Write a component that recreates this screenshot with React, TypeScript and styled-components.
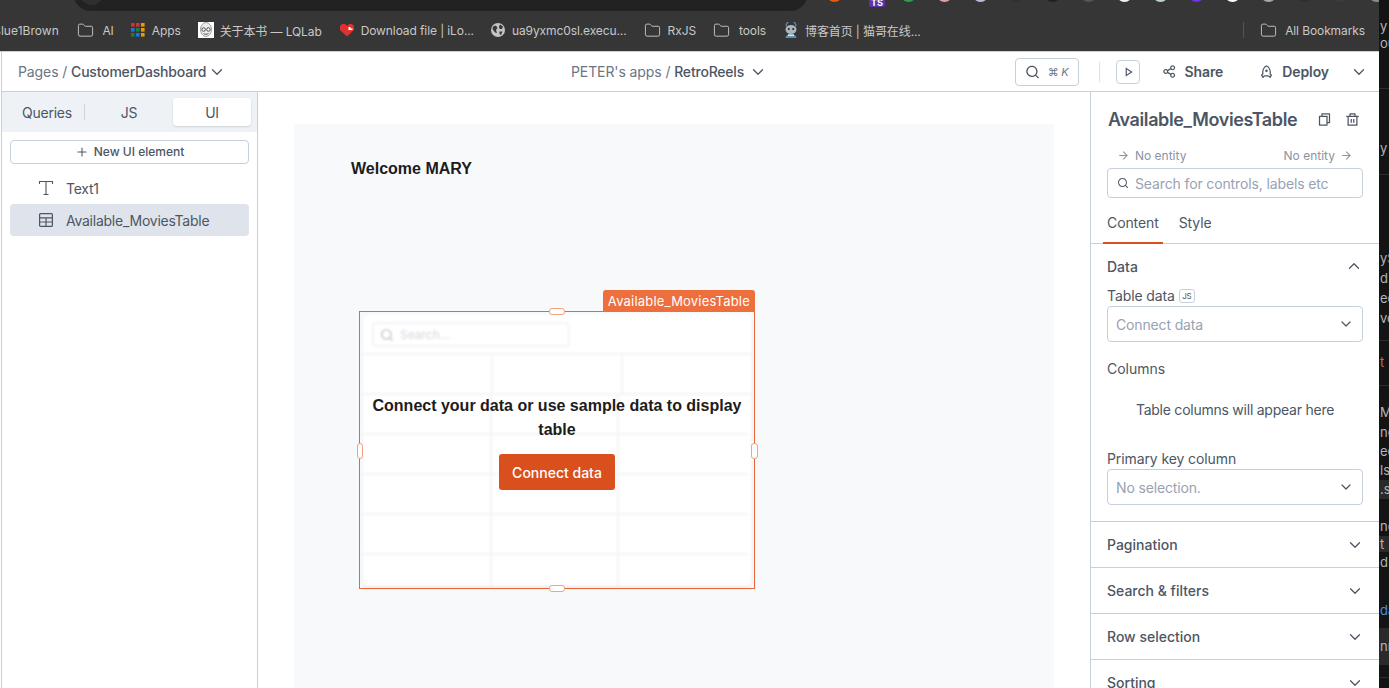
import React, { FunctionComponent, ReactNode } from "react"
import styled, { createGlobalStyle } from "styled-components"
import { ChevronDown, ChevronUp, Folder, Plus } from "lucide-react"
import {
  RiArrowRightLine,
  RiDeleteBinLine,
  RiFileCopyLine,
  RiPlayLine,
  RiRocketLine,
  RiSearchLine,
  RiShareLine,
} from "react-icons/ri"

const GlobalStyle = createGlobalStyle`
  html, body {
    margin: 0;
    height: 100%;
    overflow: hidden;
    background: #ffffff;
  }
  #root {
    height: 100%;
  }
  * {
    box-sizing: border-box;
  }
`

const FolderGlyph = () => <Folder size={17} strokeWidth={1.3} />

function AppsGrid() {
  const colors = ["#d93025", "#d93025", "#f29900", "#1a73e8", "#188038", "#f29900", "#188038", "#1a73e8", "#f29900"]
  return (
    <svg width="14" height="14" viewBox="0 0 14 14">
      {colors.map((c, i) => (
        <rect key={i} x={(i % 3) * 5} y={Math.floor(i / 3) * 5} width="3.6" height="3.6" fill={c} />
      ))}
    </svg>
  )
}

function FaceIcon() {
  return (
    <svg width="16" height="16" viewBox="0 0 16 16">
      <rect width="16" height="16" fill="#fff" />
      <ellipse cx="8" cy="7.500" rx="5.500" ry="7" fill="#ececec" stroke="#666" strokeWidth="0.6" />
      <circle cx="5.600" cy="7.500" r="1.800" fill="none" stroke="#333" strokeWidth="0.8" />
      <circle cx="10.400" cy="7.500" r="1.800" fill="none" stroke="#333" strokeWidth="0.8" />
      <path d="M5.500 11.500c1.500 1 3.500 1 5 0" fill="none" stroke="#333" strokeWidth="0.8" />
    </svg>
  )
}

function HeartIcon() {
  return (
    <svg width="16" height="14" viewBox="0 0 16 14">
      <path d="M8 13.500 1 7V3l2-2h3l2 2 2-2h3l2 2v4z" fill="#e03131" />
      <path d="M9.500 4h2v1.500h2V7h-4z" fill="#fff" />
    </svg>
  )
}

function GlobeIcon() {
  return (
    <svg width="14" height="14" viewBox="0 0 14 14">
      <circle cx="7" cy="7" r="7" fill="#c4c4c4" />
      <path d="M2 3.500 5 2.500 6.500 5 5 7 6 10 4 9.500 1.500 6zM9 1.500l3 2-1 2.500H8.500L8 3.500zM8.500 8.500h3l-1.500 3.500-1.500-1z" fill="#383838" />
    </svg>
  )
}

function CatIcon() {
  return (
    <svg width="16" height="17" viewBox="0 0 16 17">
      <path d="M3 4a5 5 0 0 1 10 0" fill="none" stroke="#5d8fb0" strokeWidth="1.200" />
      <ellipse cx="8" cy="7.500" rx="5.500" ry="4.500" fill="#aab4bc" />
      <circle cx="5.800" cy="7" r="1" fill="#222" />
      <circle cx="10.200" cy="7" r="1" fill="#222" />
      <path d="M2.500 16c.4-3 2.500-4 5.500-4s5.100 1 5.500 4z" fill="#5d8fb0" />
      <rect x="5" y="12.500" width="6" height="1.500" fill="#e8e8e8" />
    </svg>
  )
}

function TextGlyph() {
  return (
    <svg width="16" height="16" viewBox="0 0 16 16" fill="none" stroke="#4c5664" strokeWidth="1.100">
      <path d="M1.500 4V1.500h13V4M8 1.500v13M5.500 14.500h5" />
    </svg>
  )
}

function TableGlyph() {
  return (
    <svg width="16" height="16" viewBox="0 0 16 16" fill="none" stroke="#4c5664" strokeWidth="1.200">
      <rect x="1.600" y="1.600" width="12.800" height="12.800" rx="1" />
      <path d="M1.600 5.800h12.800M1.600 10h12.800M8 5.800v8.600" />
    </svg>
  )
}

const bookmarks: { label: string; icon: ReactNode; gap: number }[] = [
  { label: "AI", icon: <FolderGlyph />, gap: 8 },
  { label: "Apps", icon: <AppsGrid />, gap: 7 },
  { label: "关于本书 — LQLab", icon: <FaceIcon />, gap: 6 },
  { label: "Download file | iLo...", icon: <HeartIcon />, gap: 6 },
  { label: "ua9yxmc0sl.execu...", icon: <GlobeIcon />, gap: 7 },
  { label: "RxJS", icon: <FolderGlyph />, gap: 7 },
  { label: "tools", icon: <FolderGlyph />, gap: 9 },
  { label: "博客首页 | 猫哥在线...", icon: <CatIcon />, gap: 6 },
]

const extensionColors = [
  "#e8590c", "", "#2f9e44", "#e0a0a0", "#b9bfd8", "#2c3238", "#241f1f", "#5a5656",
  "#f2f2f2", "#bcd4c4", "#6b35e8", "#ffffff", "#a8a8a8", "#2f2f2f", "#3a4038", "#8a8a8a",
]

const sections = ["Pagination", "Search & filters", "Row selection", "Sorting"]

// what shows of the window behind, at the right edge
const edgeRows: { h: number; text?: string; tone?: "orange" | "blue"; chip?: boolean; rule?: boolean }[] = [
  { h: 17 },
  { h: 18, text: "y" },
  { h: 17, text: "ou" },
  { h: 37, rule: true },
  { h: 50 },
  { h: 18, text: "y" },
  { h: 18, rule: true },
  { h: 74 },
  { h: 19, text: "yS" },
  { h: 20, text: "d" },
  { h: 20, text: "ed" },
  { h: 20, text: "vo" },
  { h: 13, rule: true },
  { h: 12 },
  { h: 18, text: "t", tone: "orange" },
  { h: 15, rule: true },
  { h: 17 },
  { h: 19, text: "M" },
  { h: 20, text: "ne" },
  { h: 19, text: "ed" },
  { h: 19, text: "ls" },
  { h: 19, text: ".s", chip: true },
  { h: 18 },
  { h: 19, text: "nc" },
  { h: 16, text: "t", chip: true },
  { h: 20, text: "d t" },
  { h: 29 },
  { h: 18, text: "da", tone: "blue" },
  { h: 9 },
  { h: 37, text: "nn", chip: true },
  { h: 13, rule: true },
]

const ghostRows = [0, 1, 2, 3, 4, 5]

const App: FunctionComponent = () => (
  <>
    <GlobalStyle />
    <Window>
      <Main>
        <BrowserChrome>
          <AddressBar>
            <AddressButton />
          </AddressBar>
          <ExtensionStrip>
            {extensionColors.map((c, i) =>
              c ? <ExtDot key={i} $color={c} /> : <ExtBadge key={i}>TS</ExtBadge>
            )}
          </ExtensionStrip>
          <BookmarkBar>
            <BookmarkCut>Blue1Brown</BookmarkCut>
            {bookmarks.map((b) => (
              <Bookmark key={b.label} $gap={b.gap}>
                {b.icon}
                <span>{b.label}</span>
              </Bookmark>
            ))}
            <BookmarkEnd>
              <Divider />
              <Bookmark $gap={8}>
                <FolderGlyph />
                <span>All Bookmarks</span>
              </Bookmark>
            </BookmarkEnd>
          </BookmarkBar>
        </BrowserChrome>

        <Workspace>
          <Header>
            <HeaderCrumb $chevronGap={2}>
              <Muted>Pages /&nbsp;</Muted>
              <Strong>CustomerDashboard</Strong>
              <ChevronDown size={18} strokeWidth={1.7} color="#4c5664" />
            </HeaderCrumb>
            <HeaderCrumb $chevronGap={5}>
              <Muted>PETER's apps /&nbsp;</Muted>
              <Strong>RetroReels</Strong>
              <ChevronDown size={18} strokeWidth={1.7} color="#4c5664" />
            </HeaderCrumb>
            <HeaderRight>
              <OmniButton>
                <RiSearchLine size={16} />
                <Kbd>
                  ⌘ <i>K</i>
                </Kbd>
              </OmniButton>
              <HeaderDivider />
              <PlayButton>
                <RiPlayLine size={14} />
              </PlayButton>
              <ShareAction>
                <RiShareLine size={15} />
                Share
              </ShareAction>
              <DeployAction>
                <RiRocketLine size={15} />
                Deploy
              </DeployAction>
              <DeployMenu>
                <ChevronDown size={18} strokeWidth={1.7} color="#4c5664" />
              </DeployMenu>
            </HeaderRight>
          </Header>

          <Body>
            <Sidebar>
              <SegmentBar>
                <Segment>Queries</Segment>
                <SegmentDivider />
                <Segment>JS</Segment>
                <Segment $active>UI</Segment>
              </SegmentBar>
              <NewElement>
                <Plus size={14} strokeWidth={1.8} />
                New UI element
              </NewElement>
              <EntityList>
                <EntityRow>
                  <TextGlyph />
                  Text1
                </EntityRow>
                <EntityRow $selected>
                  <TableGlyph />
                  Available_MoviesTable
                </EntityRow>
              </EntityList>
            </Sidebar>

            <CanvasArea>
              <Canvas>
                <Welcome>Welcome MARY</Welcome>
                <Widget>
                  <WidgetTag>Available_MoviesTable</WidgetTag>
                  <Handle $side="top" />
                  <Handle $side="bottom" />
                  <Handle $side="left" />
                  <Handle $side="right" />
                  <GhostTable>
                    <GhostToolbar>
                      <GhostSearch>
                        <RiSearchLine size={14} color="#b9bcc2" />
                        Search...
                      </GhostSearch>
                    </GhostToolbar>
                    {ghostRows.map((r) => (
                      <GhostRow key={r} $first={r === 0} $last={r === 5}>
                        <GhostCell />
                        <GhostCell />
                        <div />
                      </GhostRow>
                    ))}
                  </GhostTable>
                  <Onboarding>
                    <OnboardingText>Connect your data or use sample data to display table</OnboardingText>
                    <ConnectButton>Connect data</ConnectButton>
                  </Onboarding>
                </Widget>
              </Canvas>
            </CanvasArea>

            <Pane>
              <PaneTitleRow>
                <PaneTitle>Available_MoviesTable</PaneTitle>
                <RiFileCopyLine size={15} />
                <RiDeleteBinLine size={15} />
              </PaneTitleRow>
              <EntityNav>
                <span>
                  <RiArrowRightLine size={13} /> No entity
                </span>
                <span>
                  No entity <RiArrowRightLine size={13} />
                </span>
              </EntityNav>
              <PaneSearch>
                <RiSearchLine size={12} color="#4c5664" />
                Search for controls, labels etc
              </PaneSearch>
              <PaneTabs>
                <PaneTab $active>Content</PaneTab>
                <PaneTab>Style</PaneTab>
              </PaneTabs>
              <OpenSection>
                <SectionHead>
                  Data
                  <ChevronUp size={18} strokeWidth={1.7} />
                </SectionHead>
                <FieldLabel>
                  Table data <JsBadge>JS</JsBadge>
                </FieldLabel>
                <Select>
                  Connect data
                  <ChevronDown size={16} strokeWidth={1.8} color="#4c5664" />
                </Select>
                <ColumnsLabel>Columns</ColumnsLabel>
                <EmptyColumns>Table columns will appear here</EmptyColumns>
                <FieldLabel>Primary key column</FieldLabel>
                <Select>
                  No selection.
                  <ChevronDown size={16} strokeWidth={1.8} color="#4c5664" />
                </Select>
              </OpenSection>
              {sections.map((s) => (
                <ClosedSection key={s}>
                  {s}
                  <ChevronDown size={18} strokeWidth={1.7} />
                </ClosedSection>
              ))}
            </Pane>
          </Body>
        </Workspace>
      </Main>
      <EdgeStrip>
        {edgeRows.map((r, i) => (
          <EdgeRow key={i} $h={r.h} $tone={r.tone} $chip={r.chip} $rule={r.rule}>
            {r.text}
          </EdgeRow>
        ))}
      </EdgeStrip>
    </Window>
  </>
)

export default App

const Window = styled.div`
  display: flex;
  width: 1389px;
  height: 688px;
  overflow: hidden;
  font-family: Inter, "Noto Sans CJK SC", sans-serif;
  color: #4c5664;
`

const Main = styled.div`
  width: 1379px;
  display: flex;
  flex-direction: column;
  flex: none;
`

const EdgeStrip = styled.div`
  flex: 1;
  min-width: 0;
  overflow: hidden;
  background: #141414;
`

const edgeTones = { orange: "#b5703f", blue: "#4f8fd6" }

const EdgeRow = styled.div<{ $h: number; $tone?: "orange" | "blue"; $chip?: boolean; $rule?: boolean }>`
  height: ${(p) => p.$h}px;
  line-height: ${(p) => p.$h}px;
  padding-left: 1px;
  font-size: 13px;
  white-space: nowrap;
  overflow: hidden;
  color: ${(p) => (p.$tone ? edgeTones[p.$tone] : "#b4b4b4")};
  background: ${(p) => (p.$chip ? "#2a2a2a" : "transparent")};
  border-bottom: ${(p) => (p.$rule ? "1px solid #2c2c2c" : "none")};
`

const BrowserChrome = styled.div`
  height: 52px;
  flex: none;
  background: #363636;
  position: relative;
  overflow: hidden;
  border-bottom: 1px solid #c6d0dc;
`

const AddressBar = styled.div`
  position: absolute;
  left: 73px;
  top: -26px;
  width: 735px;
  height: 37px;
  border-radius: 18px;
  background: #222222;
`

const AddressButton = styled.div`
  position: absolute;
  left: 6px;
  top: 6px;
  width: 25px;
  height: 25px;
  border-radius: 50%;
  background: #2f2f2f;
`

const ExtensionStrip = styled.div`
  position: absolute;
  left: 827px;
  top: -11px;
  display: flex;
  gap: 21px;
`

const ExtDot = styled.div<{ $color: string }>`
  width: 15px;
  height: 13px;
  border-radius: 50%;
  background: ${(p) => p.$color};
`

const ExtBadge = styled.div`
  width: 16px;
  height: 18px;
  margin: 0 -5px 0 6px;
  border-radius: 2px;
  background: #5b34a8;
  color: #fff;
  font-size: 9px;
  font-weight: 700;
  text-align: center;
  line-height: 28px;
`

const BookmarkBar = styled.div`
  position: absolute;
  left: 0;
  right: 0;
  top: 19px;
  height: 22px;
  display: flex;
  align-items: center;
  gap: 17px;
  padding-right: 14px;
  color: #c8c8c8;
  font-size: 12px;
  letter-spacing: -0.1px;
`

const BookmarkCut = styled.span`
  margin: 0 1.5px 0 -7px;
  letter-spacing: 0.05px;
  white-space: nowrap;
`

const Bookmark = styled.div<{ $gap: number }>`
  display: flex;
  align-items: center;
  gap: ${(p) => p.$gap}px;
  white-space: nowrap;
  color: #c8c8c8;
`

const BookmarkEnd = styled.div`
  margin-left: auto;
  display: flex;
  align-items: center;
  gap: 16px;
`

const Divider = styled.div`
  width: 1px;
  height: 16px;
  background: #555555;
`

const Workspace = styled.div`
  flex: 1;
  min-height: 0;
  display: flex;
  flex-direction: column;
  margin-left: 1px;
  border-left: 1px solid #c6d0dc;
`

const Header = styled.header`
  height: 40px;
  flex: none;
  display: grid;
  grid-template-columns: 553px auto 1fr;
  align-items: center;
  padding: 0 11px 0 16px;
  background: #ffffff;
  border-bottom: 1px solid #c6d0dc;
  font-size: 14px;
  letter-spacing: -0.2px;
`

const HeaderCrumb = styled.div<{ $chevronGap: number }>`
  display: flex;
  align-items: center;

  svg {
    margin-left: ${(p) => p.$chevronGap}px;
  }
`

const Muted = styled.span`
  color: #6a7585;
  letter-spacing: -0.1px;
`

const Strong = styled.span`
  color: #4c5664;
  font-weight: 500;
`

const HeaderRight = styled.div`
  display: flex;
  align-items: center;
  justify-content: flex-end;
`

const OmniButton = styled.div`
  width: 64px;
  height: 28px;
  display: flex;
  align-items: center;
  gap: 8px;
  padding: 0 9px;
  border: 1px solid #c6d0dc;
  border-radius: 4px;
`

const Kbd = styled.span`
  font-size: 11px;
  color: #6a7585;
  white-space: nowrap;
`

const HeaderDivider = styled.div`
  width: 1px;
  height: 20px;
  margin-left: 20px;
  background: #dce2ea;
`

const PlayButton = styled.div`
  width: 24px;
  height: 24px;
  margin-left: 16px;
  display: flex;
  align-items: center;
  justify-content: center;
  border: 1px solid #c6d0dc;
  border-radius: 4px;
`

const ShareAction = styled.div`
  display: flex;
  align-items: center;
  gap: 8px;
  margin-left: 22px;
  font-weight: 600;
  letter-spacing: -0.1px;
`

const DeployAction = styled(ShareAction)`
  margin-left: 36px;
`

const DeployMenu = styled.div`
  display: flex;
  margin-left: 21px;
`

const Body = styled.div`
  flex: 1;
  min-height: 0;
  display: flex;
`

const Sidebar = styled.aside`
  width: 256px;
  flex: none;
  border-right: 1px solid #c6d0dc;
  background: #ffffff;
`

const SegmentBar = styled.div`
  height: 40px;
  padding: 6px 0 6px 8px;
  display: grid;
  grid-template-columns: 74px 1px 88px 78px;
  align-items: center;
  background: #eef2f6;
`

const Segment = styled.div<{ $active?: boolean }>`
  height: 28px;
  display: flex;
  align-items: center;
  justify-content: center;
  border-radius: 4px;
  font-size: 14px;
  letter-spacing: -0.25px;
  background: ${(p) => (p.$active ? "#ffffff" : "transparent")};
  box-shadow: ${(p) => (p.$active ? "0 1px 2px rgba(76, 86, 100, 0.2)" : "none")};
`

const SegmentDivider = styled.div`
  width: 1px;
  height: 16px;
  background: #cdd5df;
`

const NewElement = styled.div`
  margin: 8px 8px 0;
  height: 24px;
  padding-bottom: 1px;
  display: flex;
  align-items: center;
  justify-content: center;
  gap: 5px;
  border: 1px solid #c6d0dc;
  border-radius: 4px;
  font-size: 12px;
  font-weight: 500;
`

const EntityList = styled.div`
  margin: 8px 8px 0;
`

const EntityRow = styled.div<{ $selected?: boolean }>`
  height: 32px;
  display: flex;
  align-items: center;
  gap: 12px;
  padding-left: 28px;
  border-radius: 4px;
  font-size: 14px;
  letter-spacing: -0.25px;
  background: ${(p) => (p.$selected ? "#dfe4ec" : "transparent")};
`

const CanvasArea = styled.main`
  flex: 1;
  min-width: 0;
  padding: 32px 36px 0;
  background: #ffffff;
`

const Canvas = styled.div`
  height: 100%;
  width: 760px;
  padding: 35px 57px 0;
  background: #f8f9fb;
`

const Welcome = styled.div`
  font-family: "Liberation Sans", sans-serif;
  font-size: 16px;
  font-weight: 700;
  line-height: 20px;
  color: #1c1c1c;
`

const Widget = styled.div`
  position: relative;
  width: 396px;
  height: 278px;
  margin: 132px 0 0 8px;
  border: 1px solid #ed6436;
`

const WidgetTag = styled.div`
  position: absolute;
  right: -1px;
  top: -22px;
  height: 22px;
  padding: 0 5px 1px;
  display: flex;
  align-items: center;
  border-radius: 3px 3px 0 0;
  background: #ee6f3e;
  color: #ffffff;
  font-size: 13px;
  letter-spacing: 0.2px;
  white-space: nowrap;
`

const handlePlacement = {
  top: "left: 189px; top: -4px; width: 16px; height: 7px;",
  bottom: "left: 189px; bottom: -4px; width: 16px; height: 7px;",
  left: "left: -3px; top: 131px; width: 6px; height: 16px;",
  right: "right: -4px; top: 131px; width: 7px; height: 16px;",
}

const Handle = styled.div<{ $side: keyof typeof handlePlacement }>`
  position: absolute;
  ${(p) => handlePlacement[p.$side]}
  z-index: 2;
  background: #ffffff;
  border: 1px solid #f3a283;
  border-radius: 3px;
`

const GhostTable = styled.div`
  height: calc(100% - 5px);
  margin: 3px;
  border-radius: 4px;
  background: #ffffff;
  box-shadow: 0 1px 2px rgba(0, 0, 0, 0.12);
  filter: blur(0.8px);
  overflow: hidden;
`

const GhostToolbar = styled.div`
  height: 40px;
  padding: 7px 0 0 9px;
  border-bottom: 2px solid #f3f4f6;
`

const GhostSearch = styled.div`
  width: 198px;
  height: 25px;
  display: flex;
  align-items: center;
  gap: 6px;
  padding-left: 6px;
  border: 2px solid #f3f4f6;
  border-radius: 4px;
  font-size: 12px;
  color: #d2d6de;
`

const GhostRow = styled.div<{ $first: boolean; $last: boolean }>`
  height: 40px;
  display: grid;
  grid-template-columns: ${(p) => (p.$first ? "130px 130px 1fr" : "129px 127px 1fr")};
  margin-right: ${(p) => (p.$first ? "0" : "3px")};
  border-bottom: ${(p) => (p.$last ? "none" : "2px solid #f3f4f6")};
`

const GhostCell = styled.div`
  border-right: 2px solid #f3f4f6;
`

const Onboarding = styled.div`
  position: absolute;
  left: 0;
  right: 0;
  top: 82px;
  display: flex;
  flex-direction: column;
  align-items: center;
  gap: 12px;
`

const OnboardingText = styled.div`
  width: 384px;
  text-align: center;
  font-family: "Liberation Sans", sans-serif;
  font-size: 16px;
  font-weight: 700;
  line-height: 24px;
  color: #1c1c1c;
`

const ConnectButton = styled.div`
  width: 116px;
  height: 36px;
  display: flex;
  align-items: center;
  justify-content: center;
  border-radius: 3px;
  background: #da4f1e;
  color: #ffffff;
  font-size: 14px;
  font-weight: 500;
`

const Pane = styled.aside`
  width: 289px;
  flex: none;
  overflow: hidden;
  background: #ffffff;
  border-left: 1px solid #c6d0dc;
`

const PaneTitleRow = styled.div`
  display: flex;
  align-items: center;
  gap: 13px;
  padding: 11px 19px 0 17px;
  height: 43px;
`

const PaneTitle = styled.div`
  flex: 1;
  font-size: 18px;
  font-weight: 600;
  letter-spacing: -0.38px;
  white-space: nowrap;
`

const EntityNav = styled.div`
  display: flex;
  justify-content: space-between;
  padding: 13px 26px 0 26px;
  font-size: 12px;
  color: #8a94a3;

  span {
    display: flex;
    align-items: center;
    gap: 5px;
  }
`

const PaneSearch = styled.div`
  margin: 5px 16px 0;
  height: 30px;
  display: flex;
  align-items: center;
  gap: 6px;
  padding: 0 9px;
  border: 1px solid #c6d0dc;
  border-radius: 4px;
  font-size: 14px;
  letter-spacing: -0.13px;
  color: #98a2b2;
`

const PaneTabs = styled.div`
  margin-top: 9px;
  height: 37px;
  display: flex;
  gap: 12px;
  padding-left: 12px;
  border-bottom: 1px solid #c6d0dc;
`

const PaneTab = styled.div<{ $active?: boolean }>`
  padding: 0 4px 4px;
  display: flex;
  align-items: center;
  font-size: 14px;
  height: 37px;
  letter-spacing: -0.1px;
  border-bottom: 2px solid ${(p) => (p.$active ? "#da4f1e" : "transparent")};
`

const OpenSection = styled.div`
  padding: 0 16px 16px;
  border-bottom: 1px solid #c6d0dc;
`

const SectionHead = styled.div`
  display: flex;
  align-items: center;
  justify-content: space-between;
  height: 44px;
  font-size: 14px;
  font-weight: 500;
`

const FieldLabel = styled.div`
  display: flex;
  align-items: center;
  gap: 4px;
  height: 15px;
  font-size: 14px;
  letter-spacing: -0.1px;
`

const JsBadge = styled.span`
  width: 16px;
  height: 14px;
  display: inline-flex;
  align-items: center;
  justify-content: center;
  border: 1px solid #c6d0dc;
  border-radius: 3px;
  font-size: 8px;
`

const Select = styled.div`
  margin-top: 3px;
  height: 36px;
  display: flex;
  align-items: center;
  justify-content: space-between;
  padding: 0 8px 0 8px;
  border: 1px solid #c6d0dc;
  border-radius: 4px;
  font-size: 14px;
  letter-spacing: -0.15px;
  color: #98a2b2;
`

const ColumnsLabel = styled.div`
  margin-top: 18px;
  font-size: 14px;
  line-height: 17px;
`

const EmptyColumns = styled.div`
  margin: 24px 0 33px;
  text-align: center;
  font-size: 14px;
  letter-spacing: -0.24px;
  line-height: 17px;
`

const ClosedSection = styled.div`
  height: 46px;
  flex: none;
  display: flex;
  align-items: center;
  justify-content: space-between;
  padding: 0 15px 0 16px;
  border-bottom: 1px solid #c6d0dc;
  font-size: 14px;
  font-weight: 500;
`
